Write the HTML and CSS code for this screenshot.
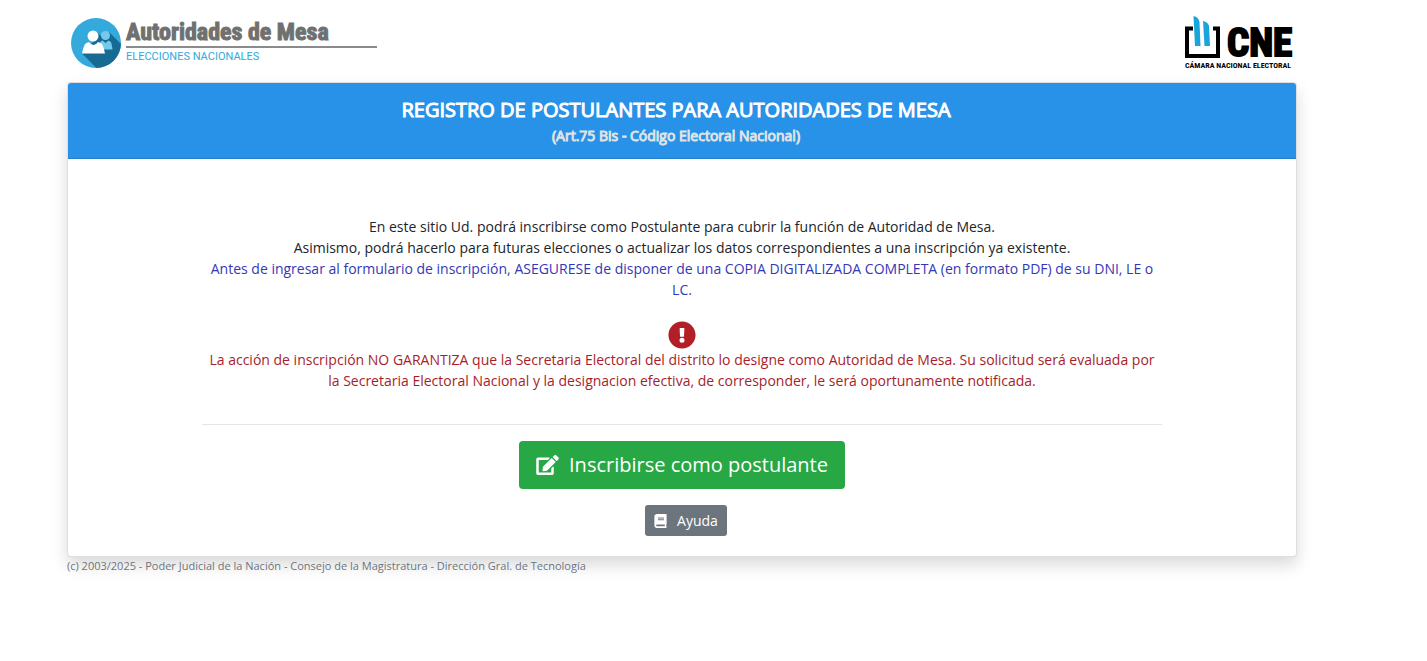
FILE: index.html
```html
<!DOCTYPE html>
<html lang="es">
<head>
<meta charset="utf-8">
<title>Autoridades de Mesa</title>
<link rel="stylesheet" href="styles.css">
</head>
<body>
<div class="page">
  <header class="brands">
    <svg class="logo-mesa" viewBox="0 0 310 56" role="img" aria-label="Autoridades de Mesa, Elecciones Nacionales">
      <defs>
        <clipPath id="disc"><circle cx="29" cy="27" r="25"/></clipPath>
      </defs>
      <circle cx="29" cy="27" r="25" fill="#34a9dc"/>
      <path clip-path="url(#disc)" fill="#176b93" d="M15 37.500 33 55.500H56V30L42 16 36 22 30 16 27 25Z"/>
      <g fill="#75c9ec">
        <circle cx="38.500" cy="19.500" r="4.500"/>
        <path d="M33 26l2.500-1.500 3 2.500 3-2.500 2.500 1.500q1 3 1.500 7.500H36Z"/>
      </g>
      <g fill="#fff">
        <circle cx="26" cy="20" r="5.500"/>
        <path d="M15 37.500q1-6 3-9.500 2-1.500 4-2 2 3 4.500 3t4.500-3q2 .5 4 2 2 3.500 3 9.500Z"/>
      </g>
      <text class="logo-title" x="59" y="24">Autoridades de Mesa</text>
      <path fill="#8b8b8b" d="M59 30h251v2H59z"/>
      <text class="logo-sub" x="59" y="44">ELECCIONES NACIONALES</text>
    </svg>
    <svg class="logo-cne" viewBox="0 0 110 56" role="img" aria-label="CNE, Cámara Nacional Electoral">
      <path fill="none" stroke="#000" stroke-width="4" d="M10 12.500H4V40H35V12.500H30"/>
      <path fill="#18a4dc" d="M10.500 0q5 1 6 6l1 24H12ZM20 5q5 1 6 5l1 20H21.500Z"/>
      <text class="cne-name" x="44" y="40">CNE</text>
      <text class="cne-sub" x="2" y="52">CÁMARA NACIONAL ELECTORAL</text>
    </svg>
  </header>

  <main class="card">
    <div class="card-header">
      <h1>REGISTRO DE POSTULANTES PARA AUTORIDADES DE MESA</h1>
      <p>(Art.75 Bis - Código Electoral Nacional)</p>
    </div>
    <div class="card-body">
      <p>En este sitio Ud. podrá inscribirse como Postulante para cubrir la función de Autoridad de Mesa.<br>
      Asimismo, podrá hacerlo para futuras elecciones o actualizar los datos correspondientes a una inscripción ya existente.</p>
      <p class="notice">Antes de ingresar al formulario de inscripción, ASEGURESE de disponer de una COPIA DIGITALIZADA COMPLETA (en formato PDF) de su DNI, LE o LC.</p>
      <div class="warning">
        <svg class="warning-icon" viewBox="0 0 512 512" aria-hidden="true"><path fill="currentColor" d="M504 256c0 137-111 248-248 248S8 393 8 256 119 8 256 8s248 111 248 248zm-248 50a46 46 0 1 0 0 92 46 46 0 0 0 0-92zm-43.700-165.300 7.400 136c.4 6.400 5.600 11.300 12 11.300h48.500c6.400 0 11.600-5 12-11.300l7.400-136c.4-6.900-5.100-12.700-12-12.700h-63.300c-6.900 0-12.400 5.800-12 12.700z"/></svg>
        <p>La acción de inscripción NO GARANTIZA que la Secretaria Electoral del distrito lo designe como Autoridad de Mesa. Su solicitud será evaluada por la Secretaria Electoral Nacional y la designacion efectiva, de corresponder, le será oportunamente notificada.</p>
      </div>
      <hr>
      <div class="actions">
        <button type="button" class="btn btn-main">
          <svg class="icon-edit" viewBox="0 0 576 512" aria-hidden="true"><path fill="currentColor" d="M402.600 83.200l90.200 90.200c3.800 3.800 3.800 10 0 13.800L274.400 405.600l-92.800 10.300c-12.400 1.400-22.900-9.100-21.500-21.500l10.300-92.800L388.800 83.200c3.800-3.800 10-3.800 13.800 0zm162-22.900l-48.800-48.800c-15.200-15.200-39.900-15.200-55.200 0l-35.400 35.400c-3.800 3.800-3.800 10 0 13.800l90.200 90.200c3.800 3.800 10 3.800 13.800 0l35.400-35.400c15.200-15.300 15.200-40 0-55.200zM384 346.200V448H64V128h229.800c3.200 0 6.200-1.300 8.500-3.500l40-40c7.600-7.600 2.200-20.500-8.500-20.500H48C21.500 64 0 85.500 0 112v352c0 26.500 21.500 48 48 48h352c26.500 0 48-21.500 48-48V306.200c0-10.700-12.900-16-20.500-8.500l-40 40c-2.200 2.300-3.500 5.300-3.500 8.500z"/></svg>
          <span>Inscribirse como postulante</span>
        </button>
        <div class="help">
          <button type="button" class="btn btn-help">
            <svg class="icon-book" viewBox="0 0 448 512" aria-hidden="true"><path fill="currentColor" d="M448 360V24c0-13.300-10.700-24-24-24H96C43 0 0 43 0 96v320c0 53 43 96 96 96h328c13.300 0 24-10.700 24-24v-16c0-7.500-3.500-14.300-8.900-18.700-4.200-15.400-4.200-59.300 0-74.700 5.400-4.300 8.900-11.100 8.900-18.600zM128 134c0-3.300 2.700-6 6-6h212c3.300 0 6 2.700 6 6v20c0 3.300-2.700 6-6 6H134c-3.300 0-6-2.700-6-6v-20zm0 64c0-3.300 2.700-6 6-6h212c3.300 0 6 2.700 6 6v20c0 3.300-2.700 6-6 6H134c-3.300 0-6-2.700-6-6v-20zm253.400 250H96c-17.700 0-32-14.300-32-32 0-17.600 14.400-32 32-32h285.400c-1.900 17.100-1.900 46.900 0 64z"/></svg>
            <span>Ayuda</span>
          </button>
        </div>
      </div>
    </div>
  </main>
  <footer class="credits">(c) 2003/2025 - Poder Judicial de la Nación - Consejo de la Magistratura - Dirección Gral. de Tecnología</footer>
</div>
</body>
</html>
```

FILE: styles.css
```css
* {
  box-sizing: border-box;
}

body {
  margin: 0;
  background: #fff;
  color: #212529;
  font: 14px/21px "Open Sans", "Noto Sans", sans-serif;
}

h1,
p {
  margin: 0;
}

.page {
  padding: 16px 130px 16px 67px;
}

.brands {
  display: flex;
  justify-content: space-between;
  padding: 0 4px 10px 0;
}

.brands svg {
  height: 56px;
}

.logo-mesa {
  width: 310px;
}

.logo-cne {
  width: 110px;
}

.logo-title {
  fill: #707070;
  stroke: #707070;
  stroke-width: 1px;
  font: bold 24px "Liberation Sans Narrow", "Roboto Condensed", "Open Sans Condensed", "DejaVu Sans Condensed", sans-serif;
}

.logo-sub {
  fill: #34a9dc;
  font: 11px Roboto, sans-serif;
}

.cne-name {
  stroke: #000;
  stroke-width: 2px;
  font: bold 39px "Liberation Sans Narrow", "Roboto Condensed", "DejaVu Sans Condensed", sans-serif;
}

.cne-sub {
  font: bold 8px "Liberation Sans Narrow", "Roboto Condensed", "DejaVu Sans Condensed", sans-serif;
}

.card {
  border: 1px solid rgba(0, 0, 0, 0.125);
  border-radius: 4px;
  background: #fff;
  background-clip: border-box;
  box-shadow: 0 8px 16px rgba(0, 0, 0, 0.15);
}

.card-header {
  padding: 12px 32px 12px 20px;
  border-bottom: 1px solid rgba(0, 0, 0, 0.125);
  border-radius: 3px 3px 0 0;
  background: #2792e7;
  color: #fff;
  text-align: center;
  -webkit-text-stroke: 1px currentColor;
}

.card-header h1 {
  font-size: 20px;
  font-weight: 400;
  line-height: 30px;
}

.card-header p {
  color: #dee2e6;
}

.card-body {
  max-width: 1000px;
  margin: 0 auto;
  padding: 57px 20px 20px;
  text-align: center;
}

.notice {
  color: #3438b8;
}

.warning {
  margin-top: 21px;
  color: #a71d2a;
}

.warning-icon {
  display: block;
  width: 28px;
  height: 28px;
  margin: 0 auto;
  color: #b21f26;
}

hr {
  margin: 33px 0 16px;
  border: 0;
  border-top: 1px solid rgba(0, 0, 0, 0.1);
}

.actions {
  display: flex;
  flex-direction: column;
  align-items: center;
  gap: 16px;
}

.help {
  padding-left: 8px;
}

.btn {
  display: flex;
  align-items: center;
  border: 0;
  border-radius: 4px;
  color: #fff;
  font-family: inherit;
  cursor: pointer;
}

.btn-main {
  gap: 10px;
  padding: 9px 17px;
  background: #28a745;
  font-size: 20px;
  line-height: 30px;
}

.btn-help {
  gap: 10px;
  padding: 5px 9px;
  border-radius: 3px;
  background: #6c757d;
  font-size: 14px;
  line-height: 21px;
}

.icon-edit {
  width: 23px;
  height: 20px;
}

.icon-book {
  width: 13px;
  height: 14px;
}

.credits {
  color: #6c757d;
  font-size: 11px;
  line-height: 17px;
}
```
